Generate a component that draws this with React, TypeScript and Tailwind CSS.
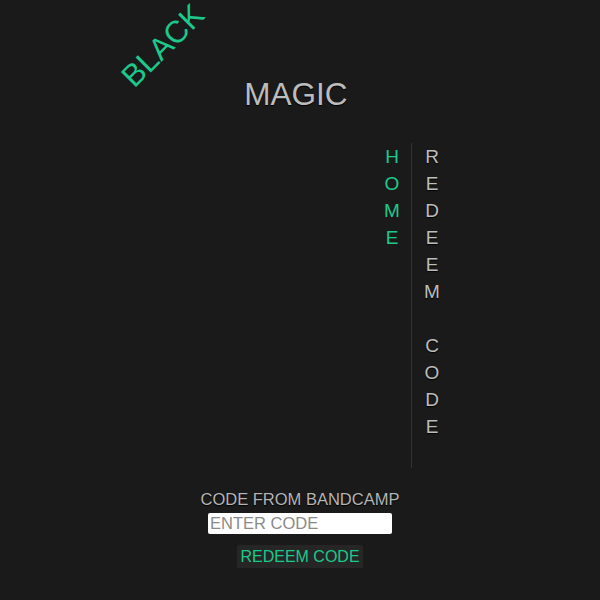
const HOME = "HOME".split("");
const REDEEM = "REDEEM CODE".split("");

function Letters({ chars, className }: { chars: string[]; className: string }) {
  return (
    <div className={`flex w-[20px] flex-col items-center ${className}`}>
      {chars.map((c, i) => (
        <span key={i} className="block h-[27px] leading-[27px]">
          {c === " " ? "\u00a0" : c}
        </span>
      ))}
    </div>
  );
}

export default function App() {
  return (
    <div
      className="relative flex h-[600px] w-full flex-col items-center overflow-hidden bg-[#1a1a1a]"
      style={{ fontFamily: '"Liberation Sans", Arial, sans-serif' }}
    >
      <span className="absolute left-[112px] top-[30px] -rotate-45 text-[31px] leading-none text-[#1cc98b]">
        BLACK
      </span>

      <h1 className="mt-[78px] pr-[8px] text-[31.5px] leading-[32px] font-normal text-[#bcbcbc] [text-shadow:0_1px_1px_#000]">
        MAGIC
      </h1>

      <nav className="mt-[33px] flex w-full pl-[382px] text-[19px]">
        <Letters chars={HOME} className="text-[#1cc98b]" />
        <div className="ml-[9px] mr-[10px] h-[325px] w-px bg-[#323232]" />
        <Letters chars={REDEEM} className="text-[#bdbdbd] [text-shadow:0_1px_1px_#000]" />
      </nav>

      <label className="mt-[21px] text-[16.5px] leading-[20px] text-[#b5b5b5] [text-shadow:0_1px_1px_#000]">
        CODE FROM BANDCAMP
      </label>
      <input
        placeholder="ENTER CODE"
        className="mt-[4px] h-[21px] w-[184px] rounded-[2px] bg-white px-[2px] text-[16.5px] leading-[21px] text-[#333] outline-none placeholder:text-[#8a8a8a]"
      />
      <button className="mt-[11px] h-[23px] w-[126px] rounded-[2px] bg-[#262626] text-[16px] leading-[23px] text-[#1cc98b]">
        REDEEM CODE
      </button>
    </div>
  );
}
